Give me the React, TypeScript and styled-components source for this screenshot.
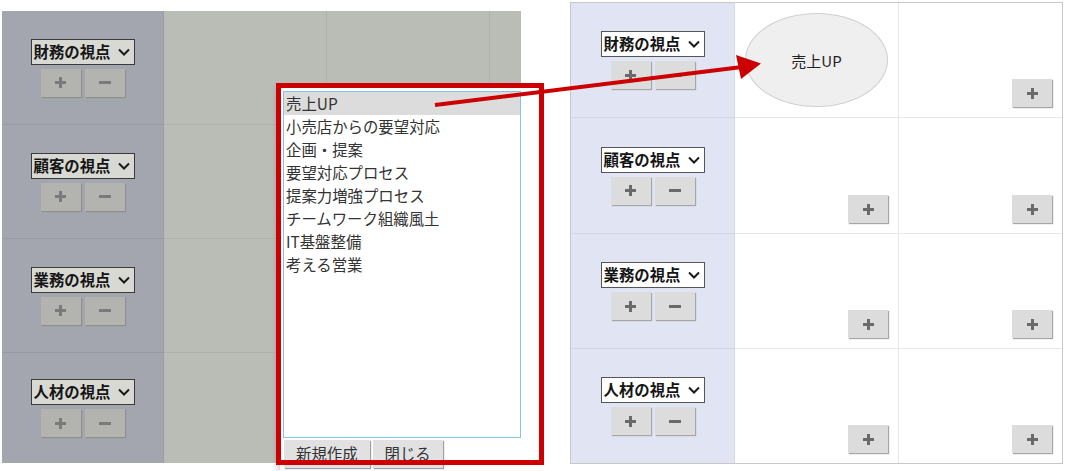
import React from "react";
import styled, { createGlobalStyle } from "styled-components";

const GlobalStyle = createGlobalStyle`
  html, body { margin: 0; padding: 0; background: #fff; }
  body {
    font-family: "Noto Sans CJK JP", "Noto Sans", sans-serif;
    color: #222;
    overflow: hidden;
  }
  * { box-sizing: border-box; }
`;

const Figure = styled.div`
  position: relative;
  width: 1066px;
  height: 471px;
  display: flex;
  align-items: flex-start;
  padding-left: 2px;
  gap: 49px;
  overflow: hidden;
`;

const DimShot = styled.div`
  flex: none;
  margin-top: 11px;
  width: 519px;
  height: 452px;
  overflow: hidden;
`;

const Shot = styled.div`
  flex: none;
  margin-top: 2px;
  width: 493px;
  height: 462px;
  border: 1px solid #c8c8c8;
`;

const Matrix = styled.div<{ $cols: string; $rows: string }>`
  display: grid;
  grid-template-columns: ${(p) => p.$cols};
  grid-template-rows: ${(p) => p.$rows};
  height: 100%;
`;

const PerspectiveCell = styled.div<{ $dim?: boolean; $lastRow?: boolean }>`
  background: ${(p) => (p.$dim ? "#a3a6ae" : "#e1e4f3")};
  border-right: 1px solid ${(p) => (p.$dim ? "#9a9da5" : "#d4d7e5")};
  border-bottom: ${(p) =>
    p.$lastRow ? "none" : `1px solid ${p.$dim ? "#989ba3" : "#d3d6e4"}`};
  display: flex;
  flex-direction: column;
  align-items: center;
  justify-content: center;
  gap: 4px;
`;

const DataCell = styled.div<{
  $dim?: boolean;
  $lastRow?: boolean;
  $lastCol?: boolean;
  $hasNode?: boolean;
}>`
  background: ${(p) => (p.$dim ? "#babcb6" : "#fff")};
  border-right: ${(p) =>
    p.$lastCol ? "none" : `1px solid ${p.$dim ? "#aeb0aa" : "#e8e8e8"}`};
  border-bottom: ${(p) =>
    p.$lastRow ? "none" : `1px solid ${p.$dim ? "#aeb0aa" : "#e8e8e8"}`};
  display: flex;
  align-items: ${(p) => (p.$hasNode ? "flex-start" : "flex-end")};
  justify-content: ${(p) => (p.$hasNode ? "flex-start" : "flex-end")};
  padding: ${(p) => (p.$hasNode ? "10px 0 0 10px" : "0 10px 10px 0")};
`;

const Picker = styled.div<{ $dim?: boolean }>`
  width: 104px;
  height: 26px;
  display: flex;
  align-items: center;
  justify-content: space-between;
  padding: 0 4px 0 2px;
  border: 1px solid ${(p) => (p.$dim ? "#3a3a3a" : "#555")};
  background: ${(p) => (p.$dim ? "#d8d9d3" : "#fff")};
  font-size: 15.4px;
  font-weight: 700;
  color: #151515;
  white-space: nowrap;
  line-height: 1;
`;

const ButtonRow = styled.div`
  display: flex;
  gap: 4px;
`;

const SquareButton = styled.button<{ $dim?: boolean }>`
  width: 40px;
  height: 28px;
  padding: 0;
  border: none;
  background: ${(p) => (p.$dim ? "#b3b4af" : "#dcdcdc")};
  box-shadow: 1px 1px 1px ${(p) => (p.$dim ? "#8e8f8a" : "#a6a6a6")};
  color: ${(p) => (p.$dim ? "#7a7a7a" : "#6a6a6a")};
  display: flex;
  align-items: center;
  justify-content: center;
`;

const NodeEllipse = styled.div`
  width: 143px;
  height: 94px;
  border-radius: 50%;
  background: #efefef;
  border: 1px solid #cfcfcf;
  display: flex;
  align-items: center;
  justify-content: center;
  font-size: 15px;
  color: #222;
`;

const Modal = styled.div`
  position: absolute;
  left: 280px;
  top: 87px;
  width: 261px;
  bottom: 0;
  background: #fff;
  padding: 4px 0 0 3px;
  display: flex;
  flex-direction: column;
  gap: 2px;
  box-shadow: -3px 0 5px rgba(0, 0, 0, 0.18);
`;

const ListBox = styled.ul`
  width: 238px;
  height: 347px;
  margin: 0;
  padding: 0;
  list-style: none;
  border: 1px solid #86c3ea;
  font-size: 15.4px;
  color: #333;
`;

const ListItem = styled.li<{ $selected?: boolean }>`
  height: 23px;
  line-height: 22px;
  padding-left: 2px;
  white-space: nowrap;
  background: ${(p) => (p.$selected ? "#dcdcdc" : "transparent")};
`;

const Footer = styled.div`
  display: flex;
  gap: 3px;
  padding-left: 1px;
`;

const DialogButton = styled.button`
  height: 28px;
  padding: 0 12px;
  border: none;
  background: #e1e1e1;
  box-shadow: 1px 1px 1px #a0a0a0;
  font-family: "Noto Sans CJK JP", sans-serif;
  font-size: 15.4px;
  color: #333;
  line-height: 1;
`;

const Callout = styled.div`
  position: absolute;
  left: 276px;
  top: 83px;
  width: 268px;
  height: 382px;
  border: 5px solid #cc0000;
  pointer-events: none;
`;

const ArrowLayer = styled.svg`
  position: absolute;
  left: 0;
  top: 0;
  pointer-events: none;
`;

const Chevron = () => (
  <svg width="12" height="8" viewBox="0 0 12 8">
    <polyline
      points="1,1.5 6,6.5 11,1.5"
      fill="none"
      stroke="#1a1a1a"
      strokeWidth="2"
    />
  </svg>
);

const PlusIcon = () => (
  <svg width="11" height="11" viewBox="0 0 11 11">
    <rect x="4" y="0" width="3" height="11" fill="currentColor" />
    <rect x="0" y="4" width="11" height="3" fill="currentColor" />
  </svg>
);

const MinusIcon = () => (
  <svg width="12" height="3" viewBox="0 0 12 3">
    <rect x="0" y="0" width="12" height="3" fill="currentColor" />
  </svg>
);

const perspectives = ["財務の視点", "顧客の視点", "業務の視点", "人材の視点"];

const items = [
  "売上UP",
  "小売店からの要望対応",
  "企画・提案",
  "要望対応プロセス",
  "提案力増強プロセス",
  "チームワーク組織風土",
  "IT基盤整備",
  "考える営業",
];

const Perspective: React.FC<{ label: string; dim?: boolean; lastRow?: boolean }> = ({
  label,
  dim,
  lastRow,
}) => (
  <PerspectiveCell $dim={dim} $lastRow={lastRow}>
    <Picker $dim={dim}>
      <span>{label}</span>
      <Chevron />
    </Picker>
    <ButtonRow>
      <SquareButton $dim={dim}>
        <PlusIcon />
      </SquareButton>
      <SquareButton $dim={dim}>
        <MinusIcon />
      </SquareButton>
    </ButtonRow>
  </PerspectiveCell>
);

export default function App() {
  return (
    <>
      <GlobalStyle />
      <Figure>
        <DimShot>
          <Matrix $cols="162px 163px 163px 163px" $rows="114px 114px 114px 110px">
            {perspectives.map((p, r) => (
              <React.Fragment key={p}>
                <Perspective label={p} dim lastRow={r === 3} />
                {[0, 1, 2].map((c) => (
                  <DataCell key={c} $dim $lastRow={r === 3} $lastCol={c === 2} />
                ))}
              </React.Fragment>
            ))}
          </Matrix>
        </DimShot>

        <Shot>
          <Matrix $cols="164px 164px 163px" $rows="115px 116px 115px 114px">
            {perspectives.map((p, r) => (
              <React.Fragment key={p}>
                <Perspective label={p} lastRow={r === 3} />
                {[0, 1].map((c) =>
                  r === 0 && c === 0 ? (
                    <DataCell key={c} $hasNode $lastRow={r === 3}>
                      <NodeEllipse>売上UP</NodeEllipse>
                    </DataCell>
                  ) : (
                    <DataCell key={c} $lastRow={r === 3} $lastCol={c === 1}>
                      <SquareButton>
                        <PlusIcon />
                      </SquareButton>
                    </DataCell>
                  )
                )}
              </React.Fragment>
            ))}
          </Matrix>
        </Shot>

        <Modal>
          <ListBox>
            {items.map((it, i) => (
              <ListItem key={it} $selected={i === 0}>
                {it}
              </ListItem>
            ))}
          </ListBox>
          <Footer>
            <DialogButton>新規作成</DialogButton>
            <DialogButton>閉じる</DialogButton>
          </Footer>
        </Modal>

        <Callout />

        <ArrowLayer width="1066" height="471" viewBox="0 0 1066 471">
          <line x1="435" y1="105" x2="742" y2="67" stroke="#cc0000" strokeWidth="4" />
          <polygon points="736,55 761,63.5 741,79" fill="#cc0000" />
        </ArrowLayer>
      </Figure>
    </>
  );
}
